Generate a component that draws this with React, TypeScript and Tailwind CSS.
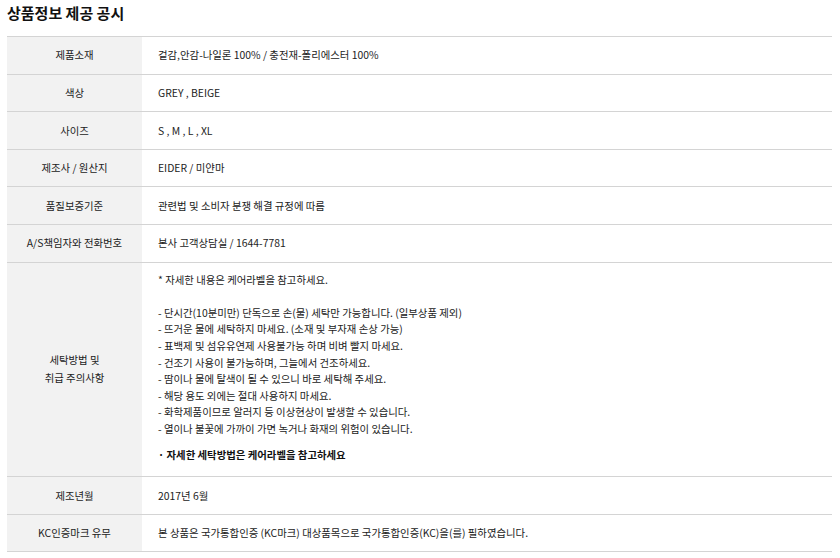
const rows: { label: string; value: string }[] = [
  { label: "제품소재", value: "겉감,안감-나일론 100% / 충전재-폴리에스터 100%" },
  { label: "색상", value: "GREY , BEIGE" },
  { label: "사이즈", value: "S , M , L , XL" },
  { label: "제조사 / 원산지", value: "EIDER / 미얀마" },
  { label: "품질보증기준", value: "관련법 및 소비자 분쟁 해결 규정에 따름" },
  { label: "A/S책임자와 전화번호", value: "본사 고객상담실 / 1644-7781" },
];

const washLines = [
  "- 단시간(10분미만) 단독으로 손(물) 세탁만 가능합니다. (일부상품 제외)",
  "- 뜨거운 물에 세탁하지 마세요. (소재 및 부자재 손상 가능)",
  "- 표백제 및 섬유유연제 사용불가능 하며 비벼 빨지 마세요.",
  "- 건조기 사용이 불가능하며, 그늘에서 건조하세요.",
  "- 땀이나 물에 탈색이 될 수 있으니 바로 세탁해 주세요.",
  "- 해당 용도 외에는 절대 사용하지 마세요.",
  "- 화학제품이므로 알러지 등 이상현상이 발생할 수 있습니다.",
  "- 열이나 불꽃에 가까이 가면 녹거나 화재의 위험이 있습니다.",
];

const tailRows = [
  { label: "제조년월", value: "2017년 6월" },
  { label: "KC인증마크 유무", value: "본 상품은 국가통합인증 (KC마크) 대상품목으로 국가통합인증(KC)을(를) 필하였습니다." },
];

function Row({ label, value }: { label: string; value: string }) {
  return (
    <tr className="h-[37.6px] border-b border-[#d4d4d4]">
      <th className="w-[135px] bg-[#f2f2f2] text-center font-normal">{label}</th>
      <td className="pl-[16px]">{value}</td>
    </tr>
  );
}

export default function App() {
  return (
    <div
      className="w-[840px] h-[558px] bg-white px-[7px] pt-[3px] text-[10.4px] text-[#222]"
      style={{ fontFamily: '"Noto Sans CJK KR", "Noto Sans", sans-serif' }}
    >
      <h2 className="text-[15px] font-bold leading-[20px] text-[#111]">상품정보 제공 공시</h2>
      <table className="mt-[13px] w-[825px] border-collapse border-t border-[#d4d4d4]">
        <tbody>
          {rows.map((r) => (
            <Row key={r.label} {...r} />
          ))}
          <tr className="border-b border-[#d4d4d4]">
            <th className="w-[135px] bg-[#f2f2f2] text-center font-normal leading-[18px]">
              세탁방법 및
              <br />
              취급 주의사항
            </th>
            <td className="pl-[16px] pt-[9px] pb-[13px] leading-[16.6px]">
              <p>* 자세한 내용은 케어라벨을 참고하세요.</p>
              <p>&nbsp;</p>
              {washLines.map((l) => (
                <p key={l}>{l}</p>
              ))}
              <p className="mt-[9px] font-bold text-[#111]">· 자세한 세탁방법은 케어라벨을 참고하세요</p>
            </td>
          </tr>
          {tailRows.map((r) => (
            <Row key={r.label} {...r} />
          ))}
        </tbody>
      </table>
    </div>
  );
}
